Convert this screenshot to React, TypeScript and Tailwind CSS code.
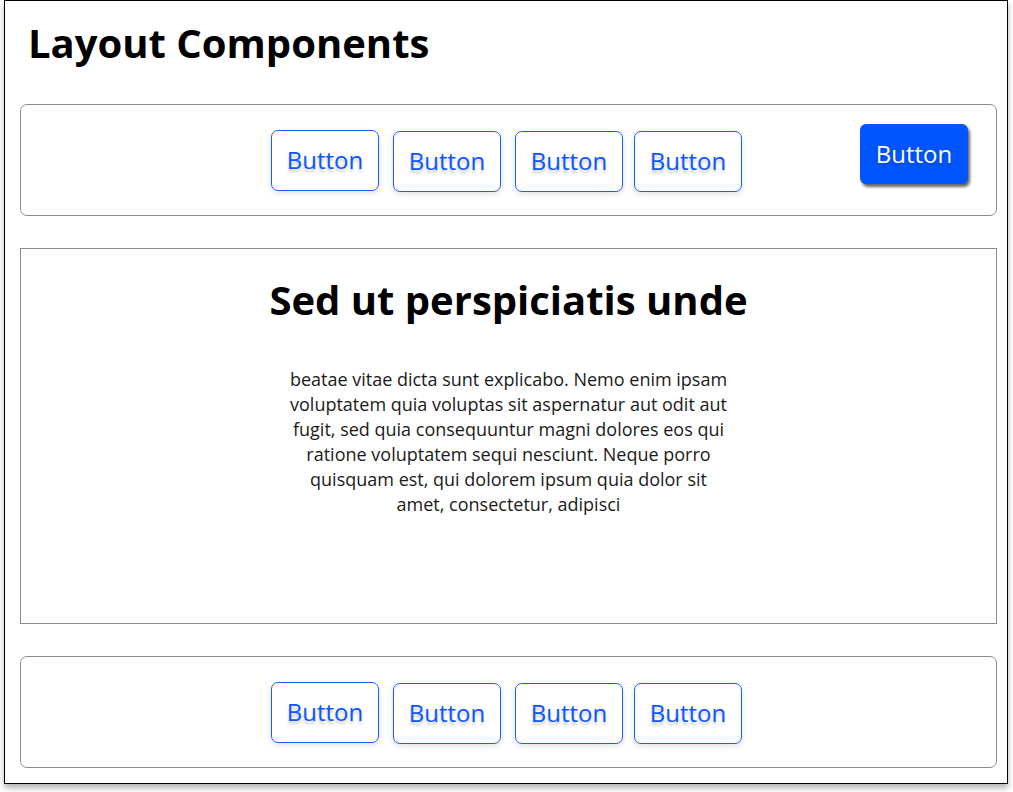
import React from 'react';

const font = { fontFamily: '"Open Sans", "Noto Sans", sans-serif' };

const OutlineButton: React.FC<{ className?: string }> = ({ className = '' }) => (
  <button
    className={`w-[108px] h-[61px] rounded-[7px] border border-[#1a5cff] bg-white text-[24px] text-[#0a57ff] shadow-[0_2px_6px_rgba(0,0,0,0.12)] [text-shadow:0_3px_3px_rgba(0,0,0,0.22)] ${className}`}
  >
    Button
  </button>
);

const ButtonRow: React.FC = () => (
  <div className="mr-[4px] flex items-center gap-[14px]">
    <OutlineButton />
    <OutlineButton className="mt-[2px]" />
    <OutlineButton className="mt-[2px]" />
    <OutlineButton className="mt-[2px] -ml-[3px]" />
  </div>
);

export default function App() {
  return (
    <div className="bg-white w-[1013px] h-[792px] text-black" style={font}>
      <div className="ml-[4px] w-[1004px] h-[784px] border border-black bg-white shadow-[0_4px_6px_rgba(0,0,0,0.3)] pl-[15px] pr-[10px] flex flex-col">
        <h1 className="mt-[18px] ml-[8px] text-[40px] leading-[48px] font-bold">Layout Components</h1>

        <header className="mt-[37px] h-[112px] rounded-[7px] border border-[#8c8c8c] grid grid-cols-[1fr_auto_1fr] items-center">
          <div />
          <ButtonRow />
          <div className="self-start flex justify-end pr-[28px] pt-[19px]">
            <button className="w-[108px] h-[60px] rounded-[6px] bg-[#0055ff] text-white text-[24px] shadow-[2px_3px_3px_rgba(0,0,0,0.6)] [text-shadow:0_2px_3px_rgba(0,0,0,0.2)]">
              Button
            </button>
          </div>
        </header>

        <main className="mt-[32px] h-[376px] border border-[#8c8c8c] flex flex-col items-center">
          <h2 className="mt-[27px] text-[40px] leading-[48px] font-bold">Sed ut perspiciatis unde</h2>
          <p className="mt-[43px] w-[442px] text-center text-[18px] leading-[25px] text-[#1a1a1a]">
            beatae vitae dicta sunt explicabo. Nemo enim ipsam voluptatem quia voluptas sit aspernatur aut odit aut
            fugit, sed quia consequuntur magni dolores eos qui ratione voluptatem sequi nesciunt. Neque porro quisquam
            est, qui dolorem ipsum quia dolor sit amet, consectetur, adipisci
          </p>
        </main>

        <footer className="mt-[32px] h-[112px] rounded-[7px] border border-[#8c8c8c] flex items-center justify-center">
          <ButtonRow />
        </footer>
      </div>
    </div>
  );
}
